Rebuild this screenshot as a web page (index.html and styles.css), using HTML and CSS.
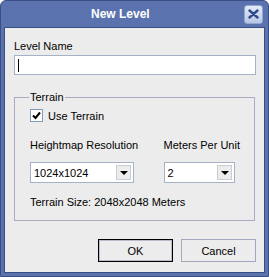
FILE: index.html
```html
<!DOCTYPE html>
<html lang="en">
<head>
    <meta charset="UTF-8">
    <title>New Level</title>
    <link rel="stylesheet" href="styles.css">
</head>
<body>
    <div class="window">
        <div class="titlebar">
            <span class="title">New Level</span>
            <div class="close-btn">
                <svg width="11" height="10" viewBox="0 0 11 10">
                    <path d="M1.5 1.5 L9.5 8.5 M9.5 1.5 L1.5 8.5" stroke="#2f4a8c" stroke-width="2.4" stroke-linecap="round"/>
                </svg>
            </div>
        </div>
        <div class="client">
            <label class="field-label">Level Name</label>
            <div class="textbox"><span class="caret"></span></div>

            <fieldset class="group">
                <legend>Terrain</legend>
                <div class="check-row">
                    <span class="checkbox">
                        <svg width="9" height="9" viewBox="0 0 9 9">
                            <path d="M1 4.5 L3.5 7 L8 1.5" stroke="#000" stroke-width="2" fill="none"/>
                        </svg>
                    </span>
                    <span>Use Terrain</span>
                </div>
                <div class="combo-row">
                    <div class="combo-field resolution">
                        <span class="field-label">Heightmap Resolution</span>
                        <div class="combo wide">
                            <span class="combo-value">1024x1024</span>
                            <span class="combo-arrow"></span>
                        </div>
                    </div>
                    <div class="combo-field">
                        <span class="field-label">Meters Per Unit</span>
                        <div class="combo narrow">
                            <span class="combo-value">2</span>
                            <span class="combo-arrow"></span>
                        </div>
                    </div>
                </div>
                <div class="size-text">Terrain Size: 2048x2048 Meters</div>
            </fieldset>

            <div class="buttons">
                <button class="default">OK</button>
                <button>Cancel</button>
            </div>
        </div>
    </div>
</body>
</html>
```
FILE: styles.css
```css
body {
    margin: 0;
    font-family: "Liberation Sans", Arial, sans-serif;
    font-size: 11px;
    color: #000;
    background: #fff;
}
.window {
    width: 269px;
    height: 277px;
    box-sizing: border-box;
    background: #5a72ad;
    border: 1px solid #3b4f84;
    border-radius: 6px 6px 0 0;
    padding: 0 3px 3px;
    display: flex;
    flex-direction: column;
}
.titlebar {
    height: 26px;
    display: flex;
    align-items: center;
}
.title {
    flex: 1;
    text-align: left;
    padding-left: 87px;
    color: #fff;
    font-weight: bold;
    font-size: 12px;
}
.close-btn {
    width: 17px;
    height: 17px;
    margin-right: 2px;
    border: 1px solid #94a6d0;
    border-radius: 3px;
    background: linear-gradient(#e4ebf7, #b7c6e6);
    display: flex;
    align-items: center;
    justify-content: center;
}
.client {
    flex: 1;
    background: #ececec;
    border: 1px solid #3b4f84;
    padding: 12px 8px 0 9px;
    display: flex;
    flex-direction: column;
}
.field-label {
    display: block;
    line-height: 13px;
    white-space: nowrap;
}
.textbox {
    margin-top: 2px;
    height: 20px;
    box-sizing: border-box;
    background: #fff;
    border: 1px solid #a5b1c4;
    display: flex;
    align-items: center;
    padding-left: 3px;
}
.caret {
    width: 1px;
    height: 13px;
    background: #000;
}
.group {
    margin: 16px 1px 0 0;
    padding: 5px 14px 11px 15px;
    border: 1px solid #a9abc4;
    min-width: 0;
}
.group legend {
    padding: 0 1px;
    margin-left: -1px;
    line-height: 13px;
}
.check-row {
    display: flex;
    align-items: center;
    gap: 5px;
    height: 13px;
}
.checkbox {
    width: 11px;
    height: 11px;
    background: #fff;
    border: 1px solid #7f9db9;
    display: flex;
    align-items: center;
    justify-content: center;
}
.combo-row {
    display: flex;
    margin-top: 17px;
}
.combo-field.resolution {
    width: 135px;
}
.combo-field .field-label {
    margin-bottom: 10px;
}
.combo {
    height: 21px;
    box-sizing: border-box;
    background: #fff;
    border: 1px solid #a5b1c4;
    display: flex;
    align-items: center;
    justify-content: space-between;
    padding: 0 2px 0 3px;
}
.combo.wide {
    width: 104px;
}
.combo.narrow {
    width: 71px;
}
.combo-arrow {
    width: 15px;
    height: 15px;
    box-sizing: border-box;
    border: 1px solid #c9ced6;
    background: #ececec;
    position: relative;
}
.combo-arrow::after {
    content: "";
    position: absolute;
    left: 3px;
    top: 5px;
    border-left: 4px solid transparent;
    border-right: 4px solid transparent;
    border-top: 4px solid #000;
}
.size-text {
    margin-top: 13px;
    line-height: 13px;
}
.buttons {
    display: flex;
    justify-content: flex-end;
    gap: 8px;
    margin-top: 18px;
}
button {
    width: 75px;
    height: 23px;
    font-family: "Liberation Sans", Arial, sans-serif;
    font-size: 11px;
    background: #ececec;
    border: 1px solid #a3a8c0;
    padding: 0;
}
button.default {
    border: 1px solid #000;
    box-shadow: inset 0 0 0 1px #b8bcce;
}
```
